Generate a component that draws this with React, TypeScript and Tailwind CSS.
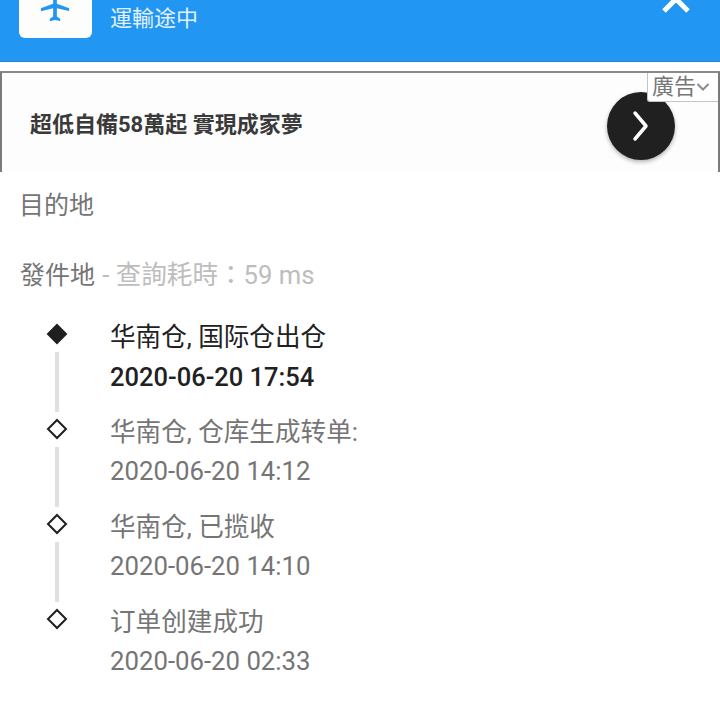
const font = "font-['Roboto','Noto_Sans_CJK_SC',sans-serif]";

const events = [
  { title: "华南仓, 国际仓出仓", time: "2020-06-20 17:54", active: true },
  { title: "华南仓, 仓库生成转单:", time: "2020-06-20 14:12", active: false },
  { title: "华南仓, 已揽收", time: "2020-06-20 14:10", active: false },
  { title: "订单创建成功", time: "2020-06-20 02:33", active: false },
];

const Diamond = ({ filled }: { filled: boolean }) => (
  <svg width="22" height="22" viewBox="0 0 22 22" className="shrink-0">
    <path
      d="M11 2 20 11 11 20 2 11Z"
      fill={filled ? "#1f1f1f" : "#fff"}
      stroke="#1f1f1f"
      strokeWidth="2"
    />
  </svg>
);

const App = () => {
  return (
    <div className={`${font} w-[720px] h-[721px] overflow-hidden bg-white`}>
      <div className="h-[62px] bg-[#2196f3] border-b border-[#1c86dc] flex overflow-hidden">
        <div className="ml-[19px] w-[73px] h-[38px] bg-[#fdfdfb] rounded-b-[6px] flex justify-center items-end overflow-hidden">
          <svg width="32" height="32" viewBox="0 0 24 24" fill="#2196f3" className="mb-[14px] ml-[-2px] shrink-0">
            <path d="M10.600 2.500c0-.9.6-2 1.400-2s1.400 1.100 1.400 2v6.300l9.200 3.300v2.200l-9.200-2.200v6.200l2.500 1.700v1.800L12 21l-3.900.9v-1.800l2.500-1.700v-6.200l-9.200 2.200v-2.200l9.200-3.300Z" />
          </svg>
        </div>
        <div className="ml-[18px] mt-[2px] text-[22px] leading-[34px] text-[#e3f2fd]">運輸途中</div>
        <svg width="34" height="34" viewBox="0 0 34 34" className="ml-auto mr-[27px] mt-[-18px] shrink-0">
          <path d="M5 5 29 29M29 5 5 29" stroke="#fff" strokeWidth="5" />
        </svg>
      </div>

      <div className="relative mt-[9px] h-[101px] bg-[#fdfdfd] border-2 border-b-0 border-[#7b7b7b] border-t-[#8a8a8a] flex items-center justify-between pl-[28px] pr-[43px]">
        <div className="text-[22px] font-bold text-[#3a3a3a] mt-[4px]">超低自備58萬起 實現成家夢</div>
        <div className="w-[68px] h-[68px] rounded-full bg-[#202020] shadow-[0_2px_4px_rgba(0,0,0,0.3)] flex items-center justify-center mt-[7px]">
          <svg width="20" height="34" viewBox="0 0 20 34">
            <path d="M4 4 15 17 4 30" fill="none" stroke="#fff" strokeWidth="3.500" strokeLinecap="round" strokeLinejoin="round" />
          </svg>
        </div>
        <div className="absolute top-0 right-0 h-[29px] w-[71px] bg-white border-l border-b border-[#c4c4c4] rounded-bl-[3px] flex items-center pl-[4px]">
          <span className="text-[22px] leading-none text-[#777]">廣告</span>
          <svg width="14" height="10" viewBox="0 0 14 10">
            <path d="M1.500 2 7 7.500 12.500 2" fill="none" stroke="#8a8a8a" strokeWidth="2" />
          </svg>
        </div>
      </div>

      <div className="pl-[19px] mt-[16px] text-[25px] leading-[36px] text-[#757575]">目的地</div>
      <div className="pl-[20px] mt-[33px] text-[25px] leading-[36px] text-[#757575] whitespace-nowrap">
        發件地{" "}
        <span className="ml-[1px] text-[25.600px] text-[#bdbdbd] font-['Roboto','Noto_Sans_CJK_TC',sans-serif]">- 查詢耗時：59 ms</span>
      </div>

      <div className="mt-[24px] pl-[46px]">
        {events.map((e, i) => (
          <div key={e.time} className="flex h-[95px]">
            <div className="w-[22px] flex flex-col items-center shrink-0 pt-[5px]">
              <Diamond filled={e.active} />
              {i < events.length - 1 && <div className="w-[4px] h-[60px] mt-[7px] bg-[#e0e0e0]" />}
            </div>
            <div className={`ml-[42px] -mt-[1px] text-[25.600px] leading-[40px] ${e.active ? "text-[#212121]" : "text-[#757575]"}`}>
              <div className="whitespace-nowrap">{e.title}</div>
              <div className={`whitespace-nowrap ${e.active ? "text-[25.500px] font-medium" : "text-[25.750px] -mt-[1px]"}`}>{e.time}</div>
            </div>
          </div>
        ))}
      </div>
    </div>
  );
};

export default App;
